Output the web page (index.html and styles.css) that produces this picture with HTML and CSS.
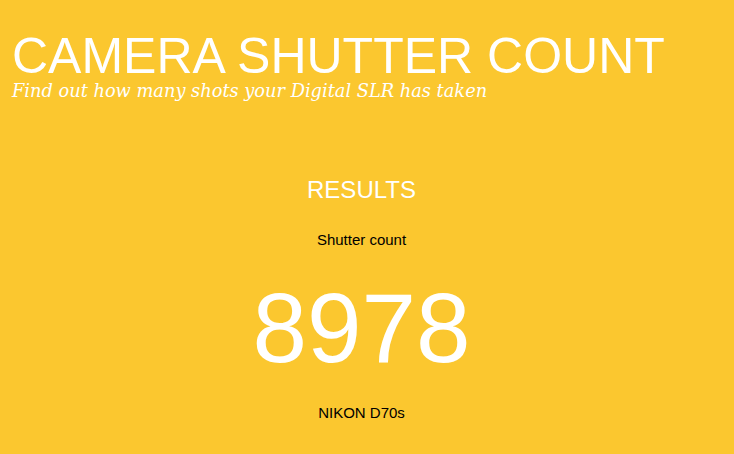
FILE: index.html
```html
<!DOCTYPE html>
<html lang="en">

<head>
  <meta charset="UTF-8">
  <meta name="viewport" content="width=device-width, initial-scale=1.0">
  <title>Camera Shutter Count</title>
  <link rel="stylesheet" href="styles.css">
</head>

<body>
  <header class="header">
    <h1 class="title">CAMERA SHUTTER COUNT</h1>
    <p class="tagline">Find out how many shots your Digital SLR has taken</p>
  </header>

  <section class="results">
    <h2 class="results-title">RESULTS</h2>
    <p class="label">Shutter count</p>
    <p class="count">8978</p>
    <p class="model">NIKON D70s</p>
  </section>
</body>

</html>
```

FILE: styles.css
```css
body {
  margin: 0;
  background-color: #fbc72f;
  font-family: "Liberation Sans", Arial, sans-serif;
  color: #fff;
}

.header {
  padding: 30px 12px 0;
}

.title {
  margin: 0;
  font-size: 50px;
  font-weight: normal;
  line-height: 52px;
}

.tagline {
  margin: 0;
  font-family: "DejaVu Serif", Georgia, serif;
  font-style: italic;
  font-size: 17.8px;
  line-height: 18px;
}

.results {
  text-align: center;
  padding: 75px 11px 0 0;
}

.results-title {
  margin: 0;
  font-size: 24px;
  font-weight: normal;
  line-height: 30px;
}

.label {
  margin: 26px 0 0;
  font-size: 15px;
  color: #000;
}

.count {
  margin: 30px 0 0;
  font-size: 98px;
  line-height: 100px;
}

.model {
  margin: 26px 0 0;
  font-size: 15px;
  color: #000;
}
```
